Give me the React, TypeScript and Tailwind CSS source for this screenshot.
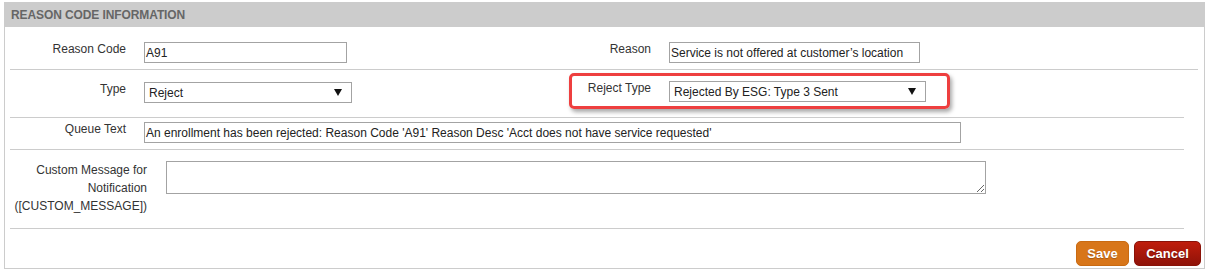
import React from 'react';

function Arrow() {
  return (
    <svg width="8" height="7" viewBox="0 0 8 7" className="shrink-0">
      <polygon points="0,0 8,0 4,7" fill="#111" />
    </svg>
  );
}

function TextBox({ value, className }: { value: string; className: string }) {
  return (
    <div className={`h-[21px] border border-[#a3a3a3] px-px leading-[21px] text-[#222] whitespace-nowrap overflow-hidden ${className}`}>
      {value}
    </div>
  );
}

function SelectBox({ value, className }: { value: string; className: string }) {
  return (
    <div className={`h-[21px] border border-[#a3a3a3] pl-[4px] pr-[9px] flex items-center justify-between text-[#222] ${className}`}>
      <span className="leading-[21px] pt-[2px]">{value}</span>
      <Arrow />
    </div>
  );
}

function Label({ text, className }: { text: string; className: string }) {
  return <div className={`text-right leading-[14px] text-[#333] ${className}`}>{text}</div>;
}

export default function App() {
  return (
    <div className="w-[1211px] h-[272px] bg-white pt-[2px] pl-[4px] font-['Liberation_Sans',Arial,sans-serif] text-[12px]">
      <div className="w-[1201px] h-[267px] border border-t-0 border-[#cccccc] flex flex-col">
        <div className="h-[25px] bg-[#cccccc] flex items-center pl-[6px] text-[12px] font-bold text-[#666666] tracking-[-0.1px]">
          REASON CODE INFORMATION
        </div>

        <div className="pl-[5px] pr-[6px]">
          {/* reason code / reason */}
          <div className="h-[43px] border-b border-[#cccccc] flex items-start pt-[15px]">
            <div className="w-[500px] flex items-start">
              <Label text="Reason Code" className="w-[116px]" />
              <TextBox value="A91" className="ml-[18px] w-[203px]" />
            </div>
            <Label text="Reason" className="w-[141px]" />
            <TextBox value="Service is not offered at customer’s location" className="ml-[18px] w-[251px]" />
          </div>

          <div className="mr-[14px]">
            {/* type / reject type */}
            <div className="h-[48px] border-b border-[#cccccc] flex items-start">
              <div className="w-[500px] flex items-start pt-[12px]">
                <Label text="Type" className="w-[116px]" />
                <SelectBox value="Reject" className="ml-[18px] w-[208px]" />
              </div>
              <div className="ml-[59px] mt-[3px] w-[381px] h-[36px] border-[3px] border-[#ee3f3f] rounded-[5px] shadow-[2px_3px_4px_rgba(0,0,0,0.35)] flex items-start pt-[5px]">
                <Label text="Reject Type" className="w-[79px]" />
                <SelectBox value="Rejected By ESG: Type 3 Sent" className="ml-[18px] w-[257px]" />
              </div>
            </div>

            {/* queue text */}
            <div className="h-[32px] border-b border-[#cccccc] flex items-start pt-[4px]">
              <Label text="Queue Text" className="w-[116px]" />
              <TextBox
                value="An enrollment has been rejected: Reason Code 'A91' Reason Desc 'Acct does not have service requested'"
                className="ml-[18px] w-[817px]"
              />
            </div>

            {/* custom message */}
            <div className="h-[79px] border-b border-[#cccccc] flex items-start pt-[11px]">
              <div className="w-[137px] text-right leading-[18px] text-[#333]">
                Custom Message for
                <br />
                Notification
                <br />
                ([CUSTOM_MESSAGE])
              </div>
              <textarea
                className="ml-[19px] w-[820px] h-[33px] border border-[#a3a3a3] outline-none"
                defaultValue=""
              />
            </div>
          </div>
        </div>

        <div className="flex-1 flex justify-end items-start pt-[12px] pr-[3px] gap-[5px]">
          <button className="w-[53px] h-[25px] rounded-[5px] bg-[#d8761a] border border-[#c96a12] text-white font-bold text-[13px] [text-shadow:0_1px_1px_rgba(0,0,0,0.25)]">
            Save
          </button>
          <button className="w-[67px] h-[25px] rounded-[5px] bg-[linear-gradient(#bf1d0c,#8f1309)] border border-[#8a1208] text-white font-bold text-[13px] [text-shadow:0_1px_1px_rgba(0,0,0,0.3)]">
            Cancel
          </button>
        </div>
      </div>
    </div>
  );
}
